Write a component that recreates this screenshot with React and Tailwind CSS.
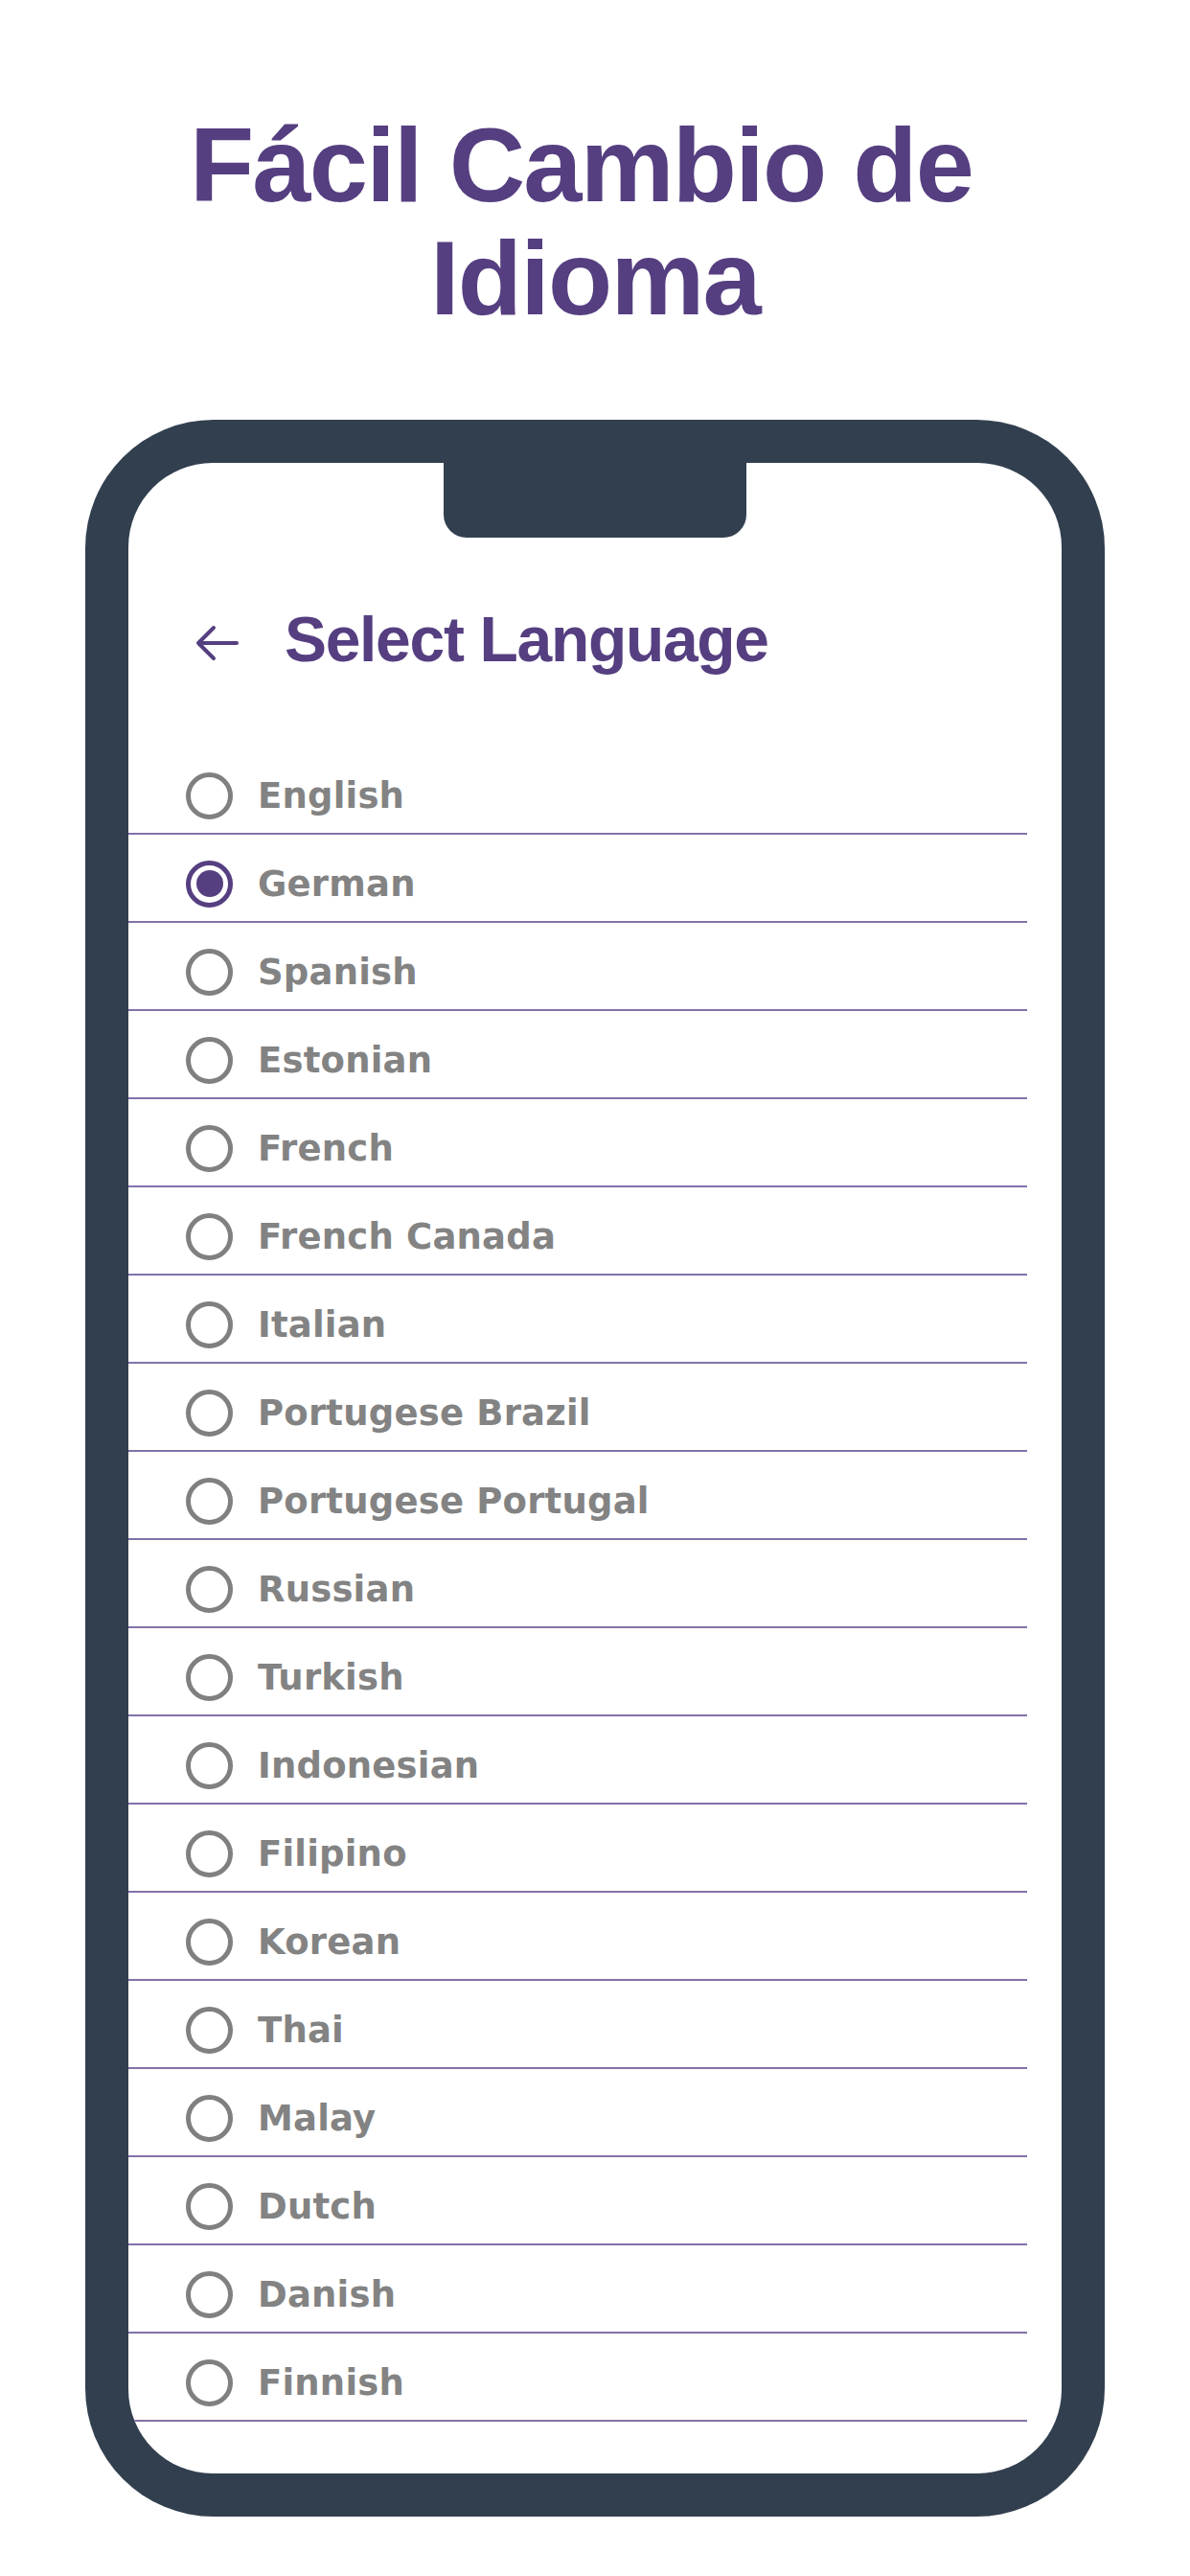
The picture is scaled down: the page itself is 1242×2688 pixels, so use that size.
import React from "react";

const LANGS = [
  "English",
  "German",
  "Spanish",
  "Estonian",
  "French",
  "French Canada",
  "Italian",
  "Portugese Brazil",
  "Portugese Portugal",
  "Russian",
  "Turkish",
  "Indonesian",
  "Filipino",
  "Korean",
  "Thai",
  "Malay",
  "Dutch",
  "Danish",
  "Finnish",
];

function Radio({ checked }) {
  if (checked) {
    return (
      <div className="w-[49px] h-[49px] shrink-0 rounded-full border-[5px] border-[#553f80] flex items-center justify-center">
        <div className="w-[28px] h-[28px] rounded-full bg-[#553f80]" />
      </div>
    );
  }
  return <div className="w-[49px] h-[49px] shrink-0 rounded-full border-[5px] border-[#808080]" />;
}

export default function App() {
  return (
    <div className="w-[1242px] min-h-[2688px] bg-white flex flex-col items-center font-['Liberation_Sans',Arial,sans-serif]">
      <h1 className="pt-[113px] text-center text-[110px] leading-[118px] font-bold tracking-[-0.016em] text-[#553f80]">
        Fácil Cambio de{"\u00a0"}
        <br />
        Idioma
      </h1>

      <div className="mt-[89px] w-[1064px] h-[2188px] rounded-[134px] bg-[#323f4f] p-[45px]">
        <div className="w-full h-full rounded-[88px] bg-white flex flex-col overflow-hidden">
          <div className="mx-auto w-[316px] h-[78px] shrink-0 rounded-b-[24px] bg-[#323f4f]" />

          <div className="mt-[73px] h-[66px] flex items-center pl-[70px]">
            <svg width="46" height="40" viewBox="0 0 46 40" className="mt-[8px]" fill="none">
              <path
                d="M43 20 H4 M19 4 L3 20 L19 36"
                stroke="#553f80"
                strokeWidth="4"
                strokeLinecap="round"
                strokeLinejoin="round"
              />
            </svg>
            <span className="ml-[47px] text-[66px] leading-[66px] font-bold tracking-[-0.02em] text-[#553f80]">
              Select Language
            </span>
          </div>

          <div className="mt-[79px] mr-[36px] flex flex-col">
            {LANGS.map((l, i) => (
              <div
                key={l}
                className="h-[92px] pt-[12px] border-b-2 border-[#8272a9] flex items-center pl-[60px]"
              >
                <Radio checked={i === 1} />
                <span className="ml-[26px] font-['DejaVu_Sans',sans-serif] font-bold text-[37px] leading-[37px] tracking-[0.005em] text-[#838383]">
                  {l}
                </span>
              </div>
            ))}
          </div>
        </div>
      </div>
    </div>
  );
}
